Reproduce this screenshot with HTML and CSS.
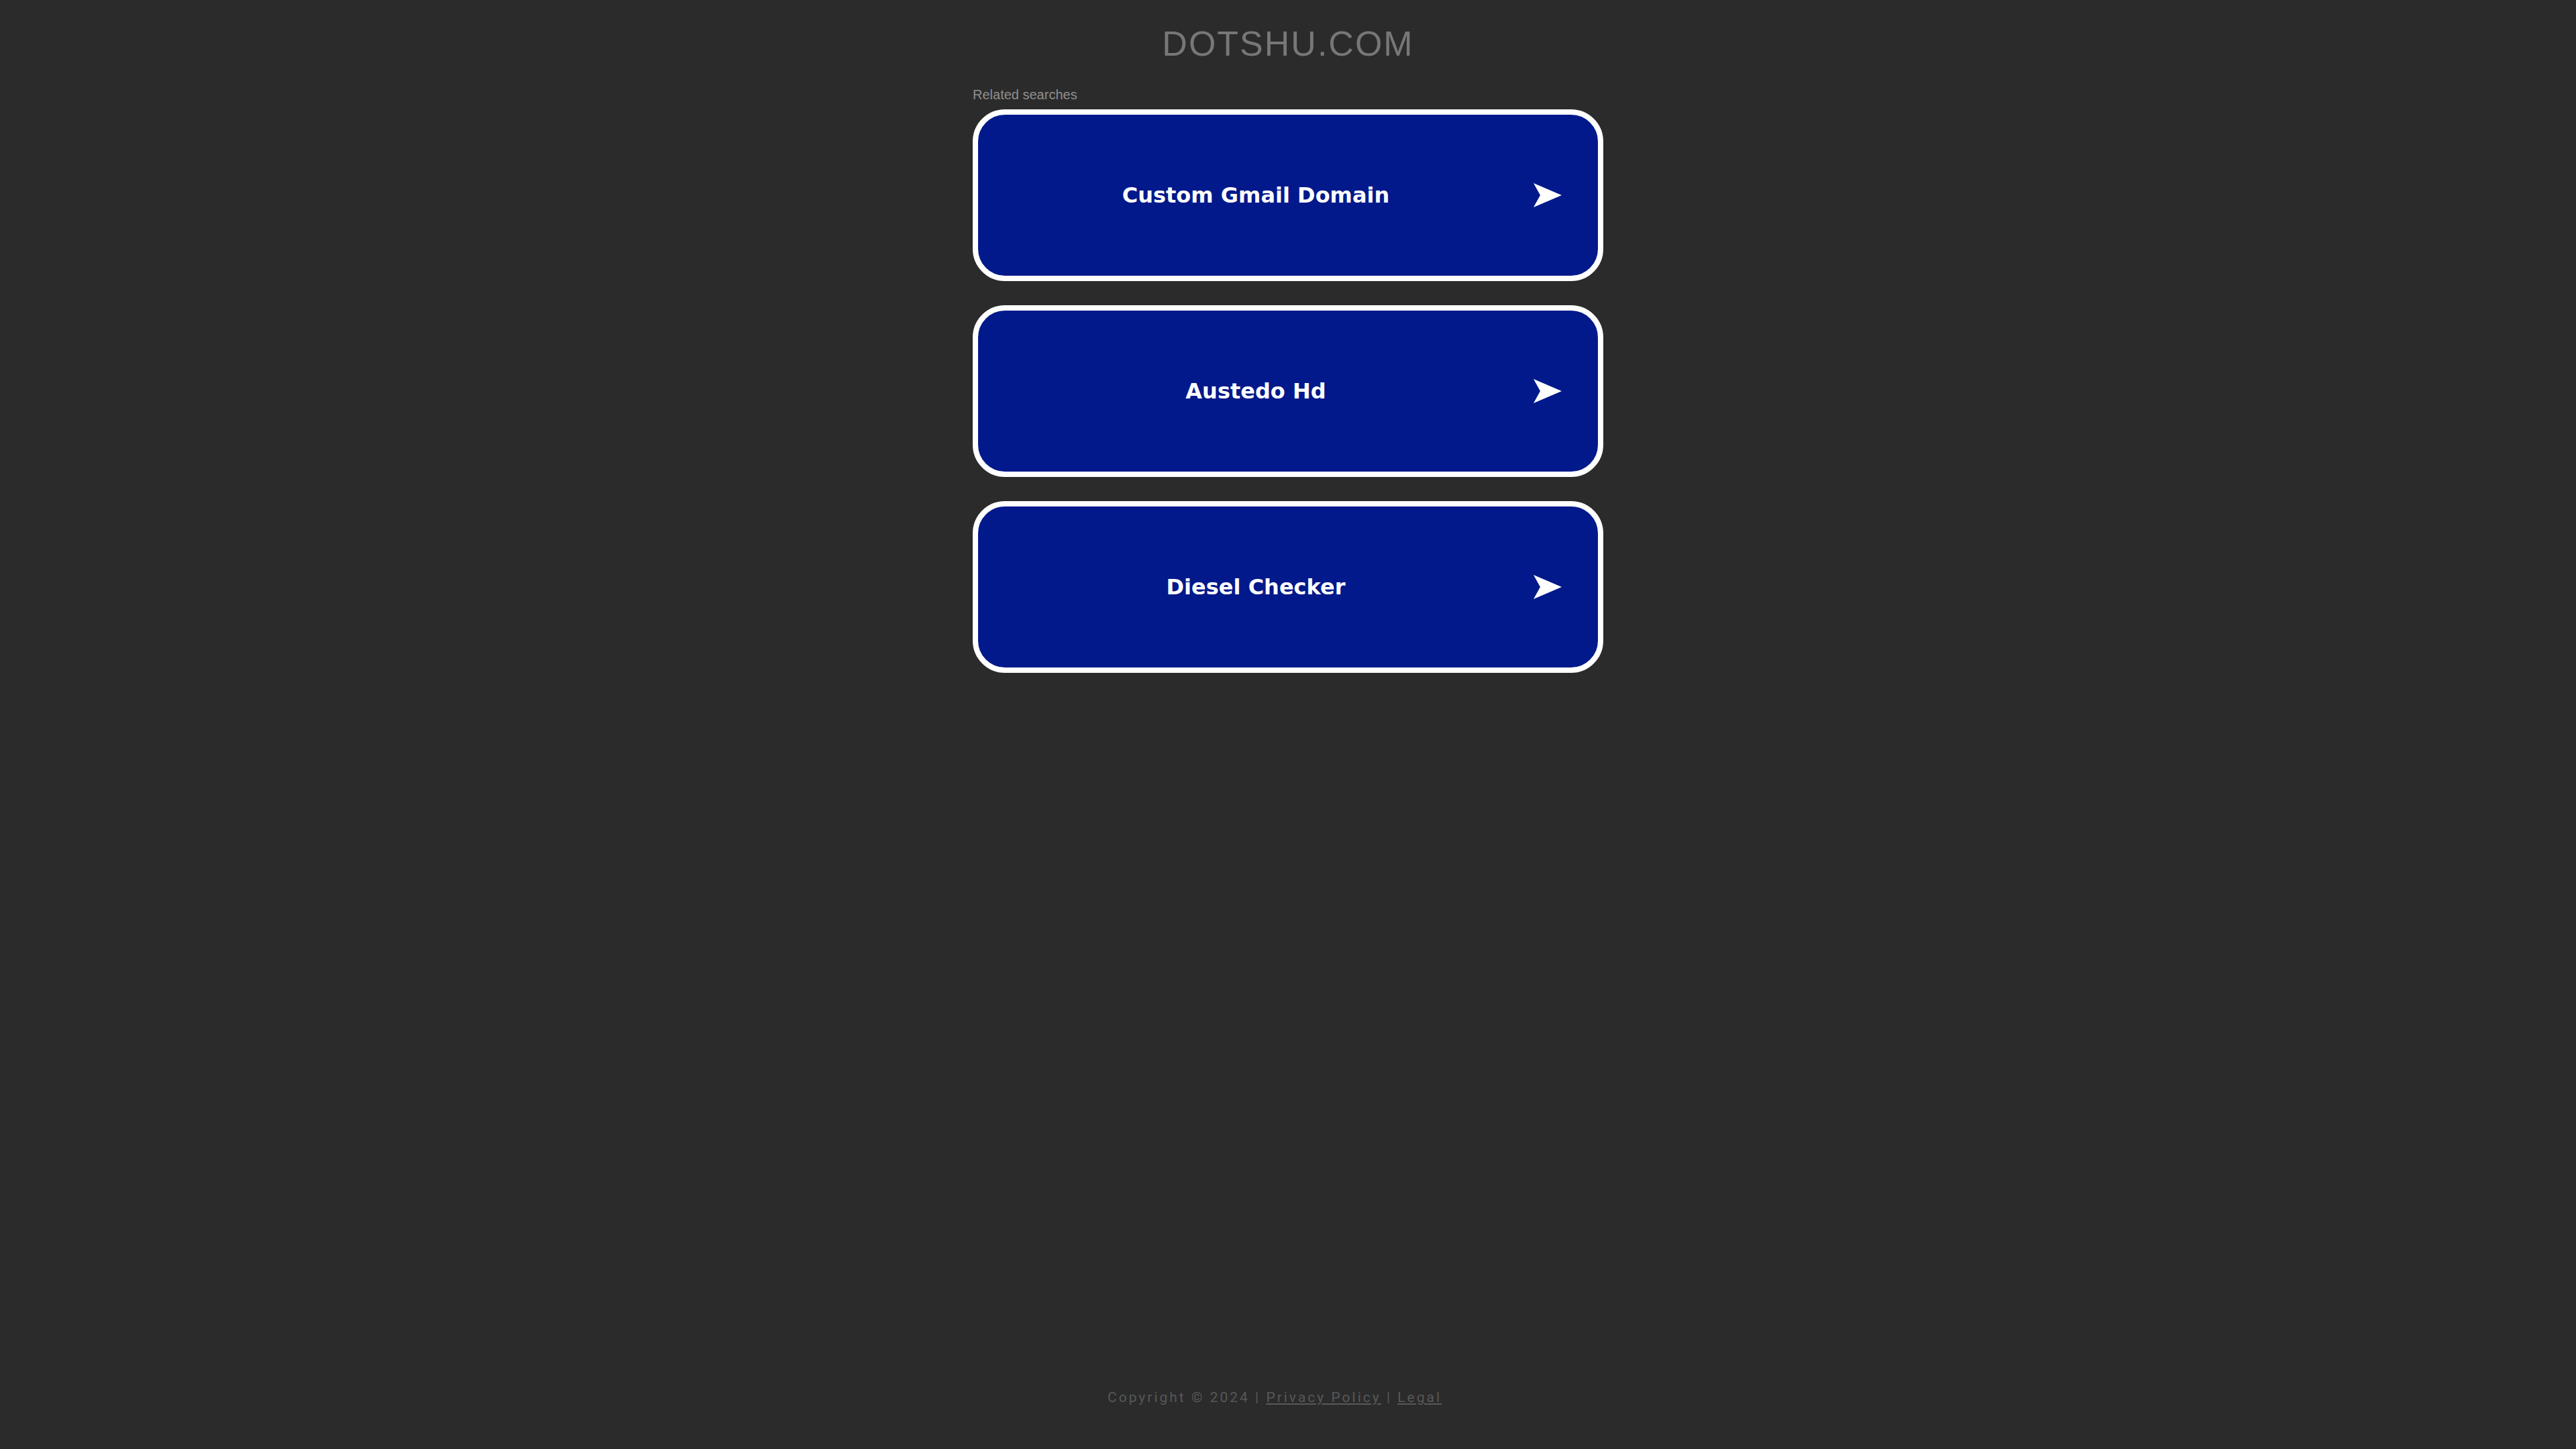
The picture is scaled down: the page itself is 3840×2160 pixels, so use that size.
FILE: index.html
```html
<!DOCTYPE html>
<html lang="en">
<head>
<meta charset="utf-8">
<title>dotshu.com</title>
<link rel="stylesheet" href="styles.css">
</head>
<body>
<header class="site-header">
  <h1 class="domain">DOTSHU.COM</h1>
</header>
<main class="content">
  <div class="related">
    <p class="related-label">Related searches</p>
    <div class="cards">
      <a class="card" href="#">
        <span class="card-text">Custom Gmail Domain</span>
        <svg class="card-arrow" viewBox="0 0 42 36" width="42" height="36"><polygon points="0,0 42,18 0,36 10,18" fill="#ffffff"/></svg>
      </a>
      <a class="card" href="#">
        <span class="card-text">Austedo Hd</span>
        <svg class="card-arrow" viewBox="0 0 42 36" width="42" height="36"><polygon points="0,0 42,18 0,36 10,18" fill="#ffffff"/></svg>
      </a>
      <a class="card" href="#">
        <span class="card-text">Diesel Checker</span>
        <svg class="card-arrow" viewBox="0 0 42 36" width="42" height="36"><polygon points="0,0 42,18 0,36 10,18" fill="#ffffff"/></svg>
      </a>
    </div>
  </div>
</main>
<footer class="site-footer">
  <p class="footer-text">Copyright © 2024 | <a class="footer-link" href="#">Privacy Policy</a> | <a class="footer-link" href="#">Legal</a></p>
</footer>
</body>
</html>
```
FILE: styles.css
```css
html, body {
  margin: 0;
  padding: 0;
}

body {
  background: #2b2b2b;
  min-height: 100vh;
  display: flex;
  flex-direction: column;
  font-family: "Liberation Sans", Arial, sans-serif;
}

.site-header {
  padding-top: 39px;
  text-align: center;
}

.domain {
  margin: 0;
  font-size: 52px;
  line-height: 52px;
  font-weight: normal;
  letter-spacing: 2px;
  color: #777777;
}

.content {
  display: flex;
  justify-content: center;
  padding-top: 40px;
}

.related {
  width: 940px;
}

.related-label {
  margin: 0 0 12px 0;
  font-size: 20px;
  line-height: 20px;
  color: #8f8f8f;
}

.cards {
  display: flex;
  flex-direction: column;
  gap: 36px;
}

.card {
  box-sizing: border-box;
  height: 256px;
  border: 8px solid #ffffff;
  border-radius: 48px;
  background: #02198b;
  display: flex;
  align-items: center;
  text-decoration: none;
}

.card-text {
  flex: 1;
  text-align: center;
  font-family: "DejaVu Sans", Verdana, sans-serif;
  font-weight: bold;
  font-size: 32px;
  color: #ffffff;
}

.card-arrow {
  flex: none;
  margin-right: 54px;
}

.site-footer {
  margin-top: auto;
  padding: 0 40px 66px 0;
  text-align: center;
}

.footer-text {
  margin: 0;
  font-family: Roboto, "Liberation Sans", sans-serif;
  font-size: 21px;
  line-height: 21px;
  letter-spacing: 3px;
  color: #585858;
}

.footer-link {
  color: #585858;
  text-decoration: underline;
}
```
